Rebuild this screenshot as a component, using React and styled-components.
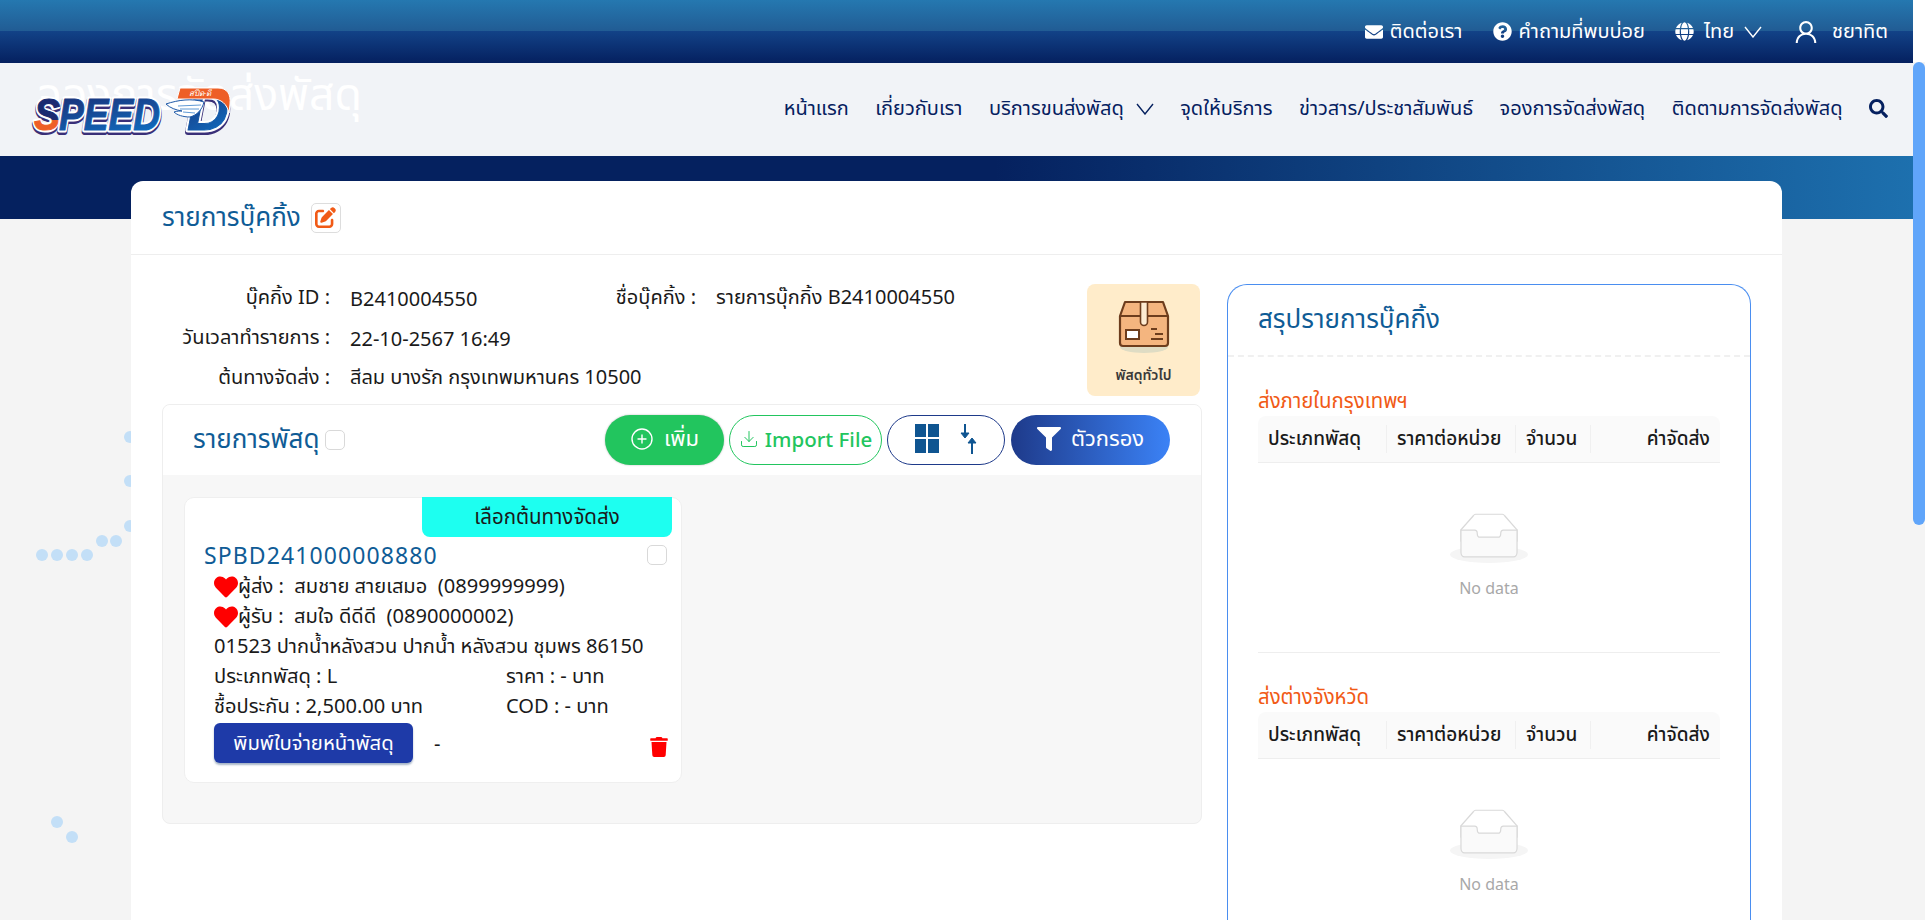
import React from "react";
import styled, { createGlobalStyle } from "styled-components";
import { FaEnvelope, FaQuestionCircle, FaGlobe, FaSearch, FaFilter, FaHeart, FaTrash } from "react-icons/fa";
import { FaPenToSquare } from "react-icons/fa6";
import { AiOutlineUser } from "react-icons/ai";
import { CirclePlus, Download } from "lucide-react";

const Global = createGlobalStyle`
  html, body { margin: 0; padding: 0; height: 100%; overflow: hidden; background: #f4f4f4; }
  body { font-family: "Noto Sans", "Noto Sans Thai", "Open Sans", sans-serif; color: #1a1a1a; }
  * { box-sizing: border-box; }
`;

const Page = styled.div`display: flex; width: 1925px; height: 920px; overflow: hidden; position: relative;`;
const Content = styled.div`width: 1913px; flex: none; position: relative;`;
const ScrollTrack = styled.div`width: 12px; flex: none; background: linear-gradient(#fff 62px, #f4f4f4 62px); padding-top: 62px;`;
const ScrollThumb = styled.div`height: 463px; background: #60a5fa; border-radius: 6px;`;

const TopBar = styled.header`
  height: 63px; display: flex; justify-content: flex-end; align-items: center; color: #fff; font-size: 20px;
  padding-right: 25px; gap: 30px;
  background: linear-gradient(180deg, #2578b0 0%, #215c94 49%, #124287 50%, #05205f 100%);
`;
const TopItem = styled.span`display: inline-flex; align-items: center; gap: ${p => p.$gap || 7}px;`;

const Nav = styled.nav`
  height: 93px; background: #f1f3f7; display: flex; align-items: center; justify-content: flex-end; gap: 26.5px;
  padding: 0 25px 2px 0; position: relative; font-size: 20px; color: #05205f;
`;
const NavItem = styled.span`display: inline-flex; align-items: center; gap: 12px;`;
const LogoWrap = styled.div`position: absolute; left: 30px; top: 22px;`;
const GhostTitle = styled.div`position: absolute; left: 38px; top: -2px; font-size: 44.5px; line-height: 64px; color: #fff; white-space: nowrap;`;

const Band = styled.div`height: 63px; background: linear-gradient(90deg, #05215f 0%, #05215f 52%, #1d70ae 100%);`;

const Dot = styled.i`position: absolute; width: 12px; height: 12px; border-radius: 50%; background: #c3dff7;`;

const Main = styled.main`
  position: relative; margin: -38px 0 0 131px; width: 1651px; height: 776px; background: #fff;
  border-radius: 12px 12px 0 0;
`;
const CardHead = styled.div`
  height: 74px; padding-left: 31px; border-bottom: 1px solid #eee; display: flex; align-items: center; gap: 10px;
  font-size: 26px; color: #0f5c96;
`;
const EditBox = styled.span`
  width: 30px; height: 30px; border: 1px solid #ddd; border-radius: 5px; display: flex; align-items: center; justify-content: center;
  color: #f15a16; font-size: 21px;
`;
const Body = styled.div`display: flex; padding: 29px 31px 0;`;
const Left = styled.div`width: 1040px; flex: none; display: flex; flex-direction: column;`;
const Right = styled.aside`
  margin-left: 25px; width: 524px; flex: none; height: 700px; border: 1px solid #4a8ef0; border-bottom: 0; border-radius: 20px 20px 0 0;
`;

const InfoTop = styled.div`display: flex; height: 120px; padding-right: 2px;`;
const InfoCols = styled.div`flex: 1; display: grid; grid-template-columns: 168px 188px 178px 1fr; grid-auto-rows: 40px; margin-top: -6px; font-size: 20px; align-items: center;`;
const Lab = styled.div`text-align: right; white-space: nowrap;`;
const Val = styled.div`padding-left: 20px; white-space: nowrap;`;
const Badge = styled.div`
  width: 113px; height: 112px; background: #ffecca; border-radius: 8px; display: flex; flex-direction: column; align-items: center;
  padding-top: 15px; font-size: 14px; font-weight: 600; color: #3a3a3a; gap: 12px;
`;

const ListPanel = styled.section`height: 420px; border: 1px solid #eee; border-radius: 8px; background: #f7f7f7; overflow: hidden; display: flex; flex-direction: column;`;
const ListHead = styled.div`height: 70px; background: #fff; display: flex; align-items: center; padding: 0 31px 0 30px; flex: none;`;
const ListTitle = styled.div`font-size: 26px; color: #0f5c96; margin-right: 5px;`;
const Check = styled.span`
  display: block; width: 20px; height: 20px; border: 1px solid #d9d9d9; border-radius: 5px; background: #fff; flex: none;
`;
const Actions = styled.div`margin-left: auto; display: flex; align-items: center; gap: 5px;`;
const Pill = styled.button`
  height: 50px; width: ${p => p.$w}px; border-radius: 25px; font: inherit; font-size: 22px; display: flex; align-items: center; justify-content: center; gap: 10px; padding: 0 0 2px;
`;
const AddBtn = styled(Pill)`background: #22c55e; border: 0; color: #fff; box-shadow: 0 0 2px rgba(0,0,0,.3);`;
const ImportBtn = styled(Pill)`background: #fff; border: 1px solid #22c55e; color: #22c55e; font-weight: 500; font-size: 20.5px; gap: 6px;`;
const ViewBtn = styled(Pill)`background: #fff; border: 1px solid #1e3a8a; gap: 20px;`;
const FilterBtn = styled(Pill)`margin-left: 1px; background: linear-gradient(90deg, #1e3a8a, #3b82f6); border: 0; color: #fff;`;

const ListBody = styled.div`padding: 22px 0 0 21px;`;
const Parcel = styled.article`
  position: relative; width: 498px; height: 286px; background: #fff; border: 1px solid #efefef; border-radius: 10px; padding: 39px 14px 0 19px;
`;
const Tag = styled.div`
  position: absolute; top: -1px; right: 9px; width: 250px; height: 40px; background: #1dfff0; border-radius: 0 0 8px 8px;
  display: flex; align-items: center; justify-content: center; font-size: 20.5px;
`;
const ParcelTop = styled.div`display: flex; justify-content: space-between; align-items: center; height: 36px;`;
const ParcelId = styled.div`font-size: 23px; color: #0f5c96; letter-spacing: 1.1px;`;
const ParcelRows = styled.div`padding-left: 10px; margin-top: -1px; font-size: 20.1px;`;
const Row = styled.div`height: 30px; display: flex; align-items: center; white-space: pre;`;
const Heart = styled(FaHeart)`color: #ff0000; font-size: 24px; flex: none;`;
const TwoCol = styled(Row)`display: grid; grid-template-columns: 292px 1fr;`;
const ActionRow = styled.div`display: flex; align-items: center; margin-top: 1px; height: 40px;`;
const PrintBtn = styled.button`
  width: 199px; height: 40px; background: #1e3aa8; color: #fff; border: 0; border-radius: 6px; font: inherit; font-size: 20.3px; padding: 0;
  box-shadow: 0 2px 2px rgba(60,90,130,.45);
`;
const Dash = styled.span`margin-left: 21px;`;
const Trash = styled(FaTrash)`margin-left: auto; margin-top: 8px; color: #ff0000; font-size: 20px; margin-right: -2px;`;

const SumHead = styled.div`height: 72px; display: flex; align-items: center; padding-left: 30px; font-size: 26px; color: #0f5c96; border-bottom: 2px dashed #f0f0f0;`;
const SumBody = styled.div`padding: 28px 30px 0;`;
const Section = styled.div`margin-bottom: 28px; border-bottom: ${p => p.$last ? 0 : "1px solid #eee"}; height: 268px;`;
const SecTitle = styled.div`height: 31px; font-size: 20.4px; line-height: 31px; color: #f15a16;`;
const THead = styled.div`
  height: 47px; display: grid; grid-template-columns: 129px 129px 75px 129px; background: #fafafa; border-bottom: 1px solid #eee;
  border-radius: 8px 8px 0 0; align-items: center; font-size: 19px; font-weight: 500;
`;
const Th = styled.div`
  padding: 0 10px; height: 28px; display: flex; align-items: center; justify-content: ${p => p.$end ? "flex-end" : "flex-start"};
  border-right: ${p => p.$end ? 0 : "1px solid #f0f0f0"}; white-space: nowrap;
`;
const Empty = styled.div`height: 189px; display: flex; flex-direction: column; align-items: center; padding-top: 50px; color: #a8a8a8; font-size: 16px; gap: 14px;`;
const SvgLayer = styled.svg`display: block;`;

const Chevron = () => (
  <svg width="18" height="12" viewBox="0 0 18 12" fill="none" stroke="currentColor" strokeWidth="1.4"><path d="M1 1l8 10 8-10" /></svg>
);

const Logo = () => (
  <SvgLayer width="206" height="52" viewBox="0 0 206 52">
    <defs>
      <linearGradient id="lg" x1="0" x2="0.4" y1="0" y2="1">
        <stop offset="0" stopColor="#1b2a70" />
        <stop offset="1" stopColor="#1169bb" />
      </linearGradient>
      <linearGradient id="sg" x1="0" x2="0" y1="0" y2="1">
        <stop offset="0" stopColor="#1b2a70" />
        <stop offset="0.62" stopColor="#1b2a70" />
        <stop offset="0.62" stopColor="#ee5f27" />
        <stop offset="1" stopColor="#ee5f27" />
      </linearGradient>
    </defs>
    <g fontFamily="Liberation Sans, sans-serif" fontWeight="700" fontStyle="italic" strokeLinejoin="round">
      <g fontSize="44" fill="#3a2f78" stroke="#3a2f78" strokeWidth="6">
        <text x="4" y="47" textLength="126" lengthAdjust="spacingAndGlyphs">SPEED</text>
        <text x="157" y="47" fontSize="58">D</text>
      </g>
      <g fontSize="44" fill="#fff" stroke="#fff" strokeWidth="5">
        <text x="4" y="45" textLength="126" lengthAdjust="spacingAndGlyphs">SPEED</text>
        <text x="157" y="45" fontSize="58">D</text>
      </g>
      <g fontSize="44" fill="url(#lg)" stroke="url(#lg)" strokeWidth="1">
        <text x="29" y="45" textLength="101" lengthAdjust="spacingAndGlyphs">PEED</text>
        <text x="157" y="45" fontSize="58">D</text>
      </g>
      <text x="4" y="45" fontSize="44" fill="url(#sg)" stroke="url(#sg)" strokeWidth="1" textLength="26" lengthAdjust="spacingAndGlyphs">S</text>
    </g>
    <path d="M150 3h38c9 0 13 6 12 16l-1 9c-2-9-8-14-16-14h-36z" fill="#ee5f27" stroke="#fff" strokeWidth="1" />
    <text x="170" y="11" fontSize="8" fill="#fff" textAnchor="middle" fontStyle="italic" fontFamily="Noto Sans, sans-serif">สปีด-ดี</text>
    <path d="M136 19c12-4 26-6 38-2-2 8-7 13-14 15-7 0-13-2-16-5 3-1 6-1 8-1-6-1-12-3-16-7z" fill="#fff" stroke="#1f5aa8" strokeWidth="1" />
    <path d="M148 21l23-1M150 24l19 0M153 27l12 1" stroke="#4f8fd0" strokeWidth=".9" />
  </SvgLayer>
);

const BoxIcon = () => (
  <svg width="52" height="54" viewBox="0 0 52 54">
    <ellipse cx="26" cy="48" rx="24" ry="6" fill="#dfdcc4" />
    <path d="M2 17 7 3h38l5 14v27a3 3 0 0 1-3 3H5a3 3 0 0 1-3-3z" fill="#f4b57f" stroke="#6d3d1d" strokeWidth="2.2" strokeLinejoin="round" />
    <path d="M2 17h48" stroke="#6d3d1d" strokeWidth="2.2" />
    <path d="M22.5 3h7v20a3.5 3.5 0 0 1-7 0z" fill="#fdecd2" stroke="#6d3d1d" strokeWidth="1.6" />
    <rect x="8" y="31" width="13" height="9" fill="#fff" stroke="#6d3d1d" strokeWidth="2" />
    <path d="M33 30h6M37 35h8M33 40h12" stroke="#6d3d1d" strokeWidth="2" />
  </svg>
);

const GridSort = () => (
  <>
    <svg width="24" height="30" viewBox="0 0 24 30"><path d="M0 0h11v13H0zM13 0h11v13H13zM0 15h11v14H0zM13 15h11v14H13z" fill="#0f5591" /></svg>
    <svg width="18" height="30" viewBox="0 0 18 30" fill="none" stroke="#0f5591" strokeWidth="2"><path d="M6 0v11" /><path d="M2 9h8l-4 5z" fill="#0f5591" strokeWidth="1" /><path d="M13 30V17" /><path d="M9 19h8l-4-5z" fill="#0f5591" strokeWidth="1" /></svg>
  </>
);

const EmptyIcon = () => (
  <svg width="78" height="50" viewBox="0 0 64 41">
    <g transform="translate(0 1)" fill="none" fillRule="evenodd">
      <ellipse fill="#f5f5f5" cx="32" cy="33" rx="32" ry="7" />
      <g fillRule="nonzero" stroke="#d9d9d9">
        <path d="M55 12.76L44.854 1.258C44.367.474 43.656 0 42.907 0H21.093c-.749 0-1.46.474-1.947 1.257L9 12.761V22h46v-9.24z" />
        <path d="M41.613 15.931c0-1.605.994-2.93 2.227-2.931H55v18.137C55 33.26 53.68 35 52.05 35h-40.1C10.32 35 9 33.259 9 31.137V13h11.16c1.233 0 2.227 1.323 2.227 2.928v.022c0 1.605 1.005 2.901 2.237 2.901h14.752c1.232 0 2.237-1.308 2.237-2.913v-.007z" fill="#fafafa" />
      </g>
    </g>
  </svg>
);

const dots = [[42,555],[57,555],[72,555],[87,555],[102,541],[116,541],[130,526],[130,481],[130,437],[57,822],[72,837]];

const Summary = ({ title, last }) => (
  <Section $last={last}>
    <SecTitle>{title}</SecTitle>
    <THead>
      <Th>ประเภทพัสดุ</Th><Th>ราคาต่อหน่วย</Th><Th>จำนวน</Th><Th $end>ค่าจัดส่ง</Th>
    </THead>
    <Empty><EmptyIcon /><span>No data</span></Empty>
  </Section>
);

export default function App() {
  return (
    <Page>
      <Global />
      <Content>
        <TopBar>
          <TopItem><FaEnvelope size={18} />ติดต่อเรา</TopItem>
          <TopItem><FaQuestionCircle size={19} />คำถามที่พบบ่อย</TopItem>
          <TopItem $gap={10}><FaGlobe size={19} />ไทย<Chevron /></TopItem>
          <TopItem $gap={12}><AiOutlineUser size={28} />ชยาทิต</TopItem>
        </TopBar>
        <Nav>
          <GhostTitle>จองการจัดส่งพัสดุ</GhostTitle>
          <LogoWrap><Logo /></LogoWrap>
          <NavItem>หน้าแรก</NavItem>
          <NavItem>เกี่ยวกับเรา</NavItem>
          <NavItem>บริการขนส่งพัสดุ<Chevron /></NavItem>
          <NavItem>จุดให้บริการ</NavItem>
          <NavItem>ข่าวสาร/ประชาสัมพันธ์</NavItem>
          <NavItem>จองการจัดส่งพัสดุ</NavItem>
          <NavItem>ติดตามการจัดส่งพัสดุ</NavItem>
          <FaSearch size={19} />
        </Nav>
        <Band />
        {dots.map(([x, y]) => <Dot key={`${x}-${y}`} style={{ left: x - 6, top: y - 6 }} />)}
        <Main>
          <CardHead>รายการบุ๊คกิ้ง<EditBox><FaPenToSquare /></EditBox></CardHead>
          <Body>
            <Left>
              <InfoTop>
                <InfoCols>
                  <Lab>บุ๊คกิ้ง ID :</Lab><Val>B2410004550</Val><Lab>ชื่อบุ๊คกิ้ง :</Lab><Val>รายการบุ๊กกิ้ง B2410004550</Val>
                  <Lab>วันเวลาทำรายการ :</Lab><Val>22-10-2567 16:49</Val><span /><span />
                  <Lab>ต้นทางจัดส่ง :</Lab><Val>สีลม บางรัก กรุงเทพมหานคร 10500</Val><span /><span />
                </InfoCols>
                <Badge><BoxIcon />พัสดุทั่วไป</Badge>
              </InfoTop>
              <ListPanel>
                <ListHead>
                  <ListTitle>รายการพัสดุ</ListTitle>
                  <Check />
                  <Actions>
                    <AddBtn $w={119}><CirclePlus size={24} strokeWidth={1.4} />เพิ่ม</AddBtn>
                    <ImportBtn $w={153}><Download size={20} strokeWidth={1.2} />Import File</ImportBtn>
                    <ViewBtn $w={118}><GridSort /></ViewBtn>
                    <FilterBtn $w={159}><FaFilter size={24} />ตัวกรอง</FilterBtn>
                  </Actions>
                </ListHead>
                <ListBody>
                  <Parcel>
                    <Tag>เลือกต้นทางจัดส่ง</Tag>
                    <ParcelTop><ParcelId>SPBD241000008880</ParcelId><Check /></ParcelTop>
                    <ParcelRows>
                      <Row><Heart />ผู้ส่ง :  สมชาย สายเสมอ  (0899999999)</Row>
                      <Row><Heart />ผู้รับ :  สมใจ ดีดีดี  (0890000002)</Row>
                      <Row>01523 ปากน้ำหลังสวน ปากน้ำ หลังสวน ชุมพร 86150</Row>
                      <TwoCol><span>ประเภทพัสดุ : L</span><span>ราคา : - บาท</span></TwoCol>
                      <TwoCol><span>ชื้อประกัน : 2,500.00 บาท</span><span>COD : - บาท</span></TwoCol>
                      <ActionRow><PrintBtn>พิมพ์ใบจ่ายหน้าพัสดุ</PrintBtn><Dash>-</Dash><Trash /></ActionRow>
                    </ParcelRows>
                  </Parcel>
                </ListBody>
              </ListPanel>
            </Left>
            <Right>
              <SumHead>สรุปรายการบุ๊คกิ้ง</SumHead>
              <SumBody>
                <Summary title="ส่งภายในกรุงเทพฯ" />
                <Summary title="ส่งต่างจังหวัด" last />
              </SumBody>
            </Right>
          </Body>
        </Main>
      </Content>
      <ScrollTrack><ScrollThumb /></ScrollTrack>
    </Page>
  );
}
